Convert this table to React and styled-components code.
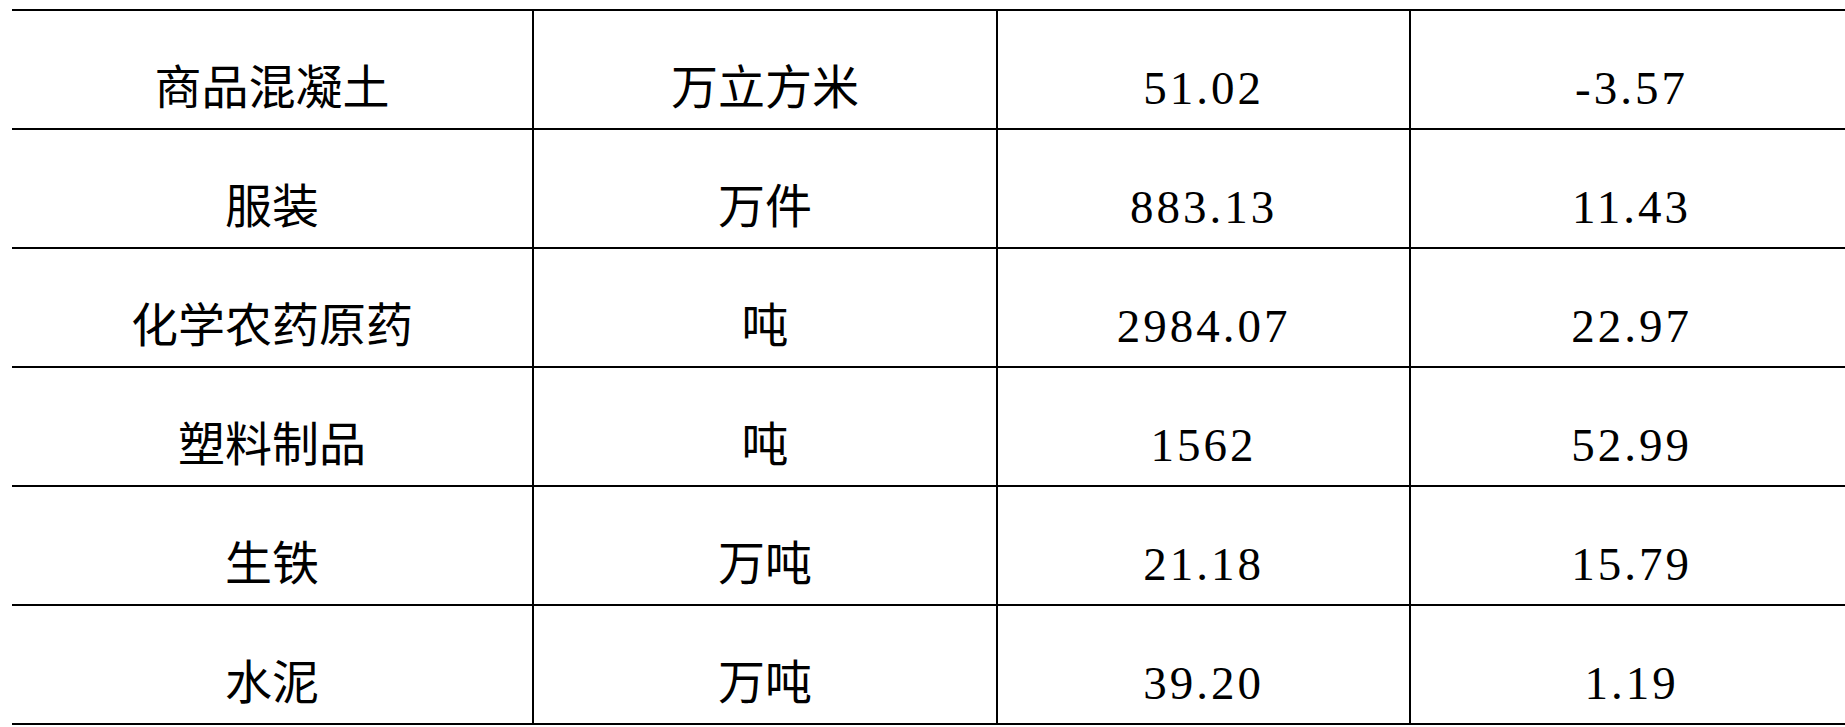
import React from "react";
import styled, { createGlobalStyle } from "styled-components";

const GlobalStyle = createGlobalStyle`
  html, body {
    margin: 0;
    padding: 0;
    background: #fff;
    overflow: hidden;
  }
`;

const Page = styled.div`
  width: 1845px;
  height: 727px;
  padding: 9px 0 0 12px;
  box-sizing: border-box;
  overflow: hidden;
`;

const Table = styled.table`
  border-collapse: collapse;
  table-layout: fixed;
  width: 1840px;
  border-top: 2px solid #000;
  color: #000;
  font-family: "Liberation Serif", "Noto Sans CJK SC", serif;
`;

const Cell = styled.td`
  width: ${(props) => props.$w}px;
  height: 119px;
  padding: 38px 0 0;
  box-sizing: border-box;
  text-align: center;
  vertical-align: middle;
  font-size: 47px;
  line-height: 1.2;
  letter-spacing: ${(props) => (props.$num ? "3px" : "0")};
  border-bottom: 2px solid #000;
  border-left: ${(props) => (props.$first ? "none" : "2px solid #000")};
`;

const widths = [521, 464, 413, 442];

const rows = [
  ["商品混凝土", "万立方米", "51.02", "-3.57"],
  ["服装", "万件", "883.13", "11.43"],
  ["化学农药原药", "吨", "2984.07", "22.97"],
  ["塑料制品", "吨", "1562", "52.99"],
  ["生铁", "万吨", "21.18", "15.79"],
  ["水泥", "万吨", "39.20", "1.19"],
];

export default function App() {
  return (
    <>
      <GlobalStyle />
      <Page>
        <Table>
          <tbody>
            {rows.map((row) => (
              <tr key={row[0]}>
                {row.map((value, i) => (
                  <Cell key={i} $w={widths[i]} $first={i === 0} $num={i > 1}>
                    {value}
                  </Cell>
                ))}
              </tr>
            ))}
          </tbody>
        </Table>
      </Page>
    </>
  );
}
